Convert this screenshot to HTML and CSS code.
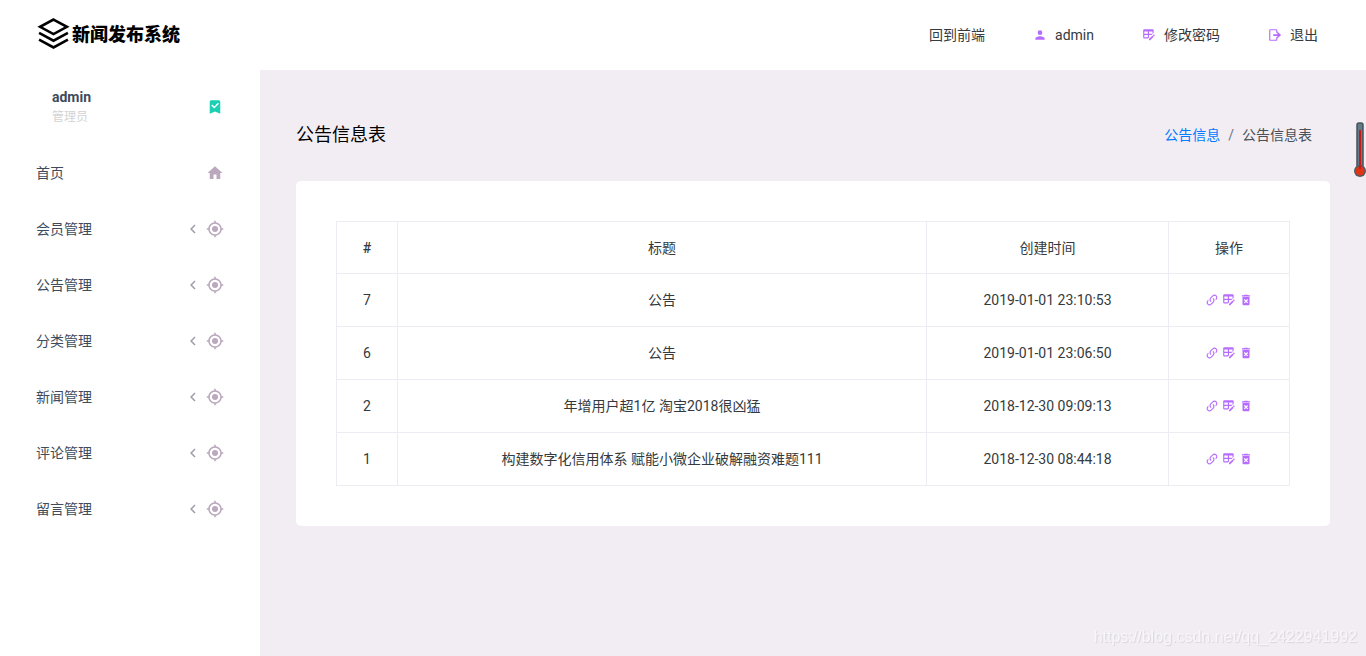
FILE: index.html
```html
<!DOCTYPE html>
<html lang="zh-CN">
<head>
<meta charset="utf-8">
<title>新闻发布系统</title>
<link rel="stylesheet" href="styles.css">
</head>
<body>
<svg class="sprite" aria-hidden="true">
  <symbol id="account" viewBox="0 0 24 24"><path d="M12,4A4,4 0 0,1 16,8A4,4 0 0,1 12,12A4,4 0 0,1 8,8A4,4 0 0,1 12,4M12,14C16.42,14 20,15.79 20,18V20H4V18C4,15.79 7.58,14 12,14Z"/></symbol>
  <symbol id="table-edit" viewBox="0 0 24 24"><path d="M21.7,13.35L20.7,14.35L18.65,12.3L19.65,11.3C19.86,11.08 20.21,11.08 20.42,11.3L21.7,12.58C21.92,12.79 21.92,13.14 21.7,13.35M12,18.94L18.07,12.88L20.12,14.93L14.06,21H12V18.94M4,2H18A2,2 0 0,1 20,4V8.17L16.17,12H12V16.17L10.17,18H4A2,2 0 0,1 2,16V4A2,2 0 0,1 4,2M4,6V10H10V6H4M12,6V10H18V6H12M4,12V16H10V12H4Z"/></symbol>
  <symbol id="logout" viewBox="0 0 24 24"><path d="M4,2H14A2,2 0 0,1 16,4V8H14V4H4V20H14V16H16V20A2,2 0 0,1 14,22H4A2,2 0 0,1 2,20V4A2,2 0 0,1 4,2M9,10.500H16V6L22.500,12L16,18V13.500H9Z"/></symbol>
  <symbol id="bookmark" viewBox="0 0 24 24"><path d="M17,3A2,2 0 0,1 19,5V21L12,18L5,21V5C5,3.89 5.9,3 7,3H17M11,14L17.25,7.76L15.84,6.34L11,11.18L8.41,8.59L7,10L11,14Z"/></symbol>
  <symbol id="home" viewBox="0 0 24 24"><path d="M10,20V14H14V20H19V12H22L12,3L2,12H5V20H10Z"/></symbol>
  <symbol id="target" viewBox="0 0 24 24"><path d="M12,8A4,4 0 0,1 16,12A4,4 0 0,1 12,16A4,4 0 0,1 8,12A4,4 0 0,1 12,8M3.05,13H1V11H3.05C3.5,6.83 6.83,3.5 11,3.05V1H13V3.05C17.17,3.5 20.5,6.83 20.95,11H23V13H20.95C20.5,17.17 17.17,20.5 13,20.95V23H11V20.95C6.83,20.5 3.5,17.17 3.05,13M12,5A7,7 0 0,0 5,12A7,7 0 0,0 12,19A7,7 0 0,0 19,12A7,7 0 0,0 12,5Z"/></symbol>
  <symbol id="chevron" viewBox="0 0 24 24"><path d="M15.41,16.58L10.83,12L15.41,7.41L14,6L8,12L14,18L15.41,16.58Z"/></symbol>
  <symbol id="link" viewBox="0 0 24 24"><path d="M10.59,13.41C11,13.8 11,14.44 10.59,14.83C10.2,15.22 9.56,15.22 9.17,14.83C7.22,12.88 7.22,9.71 9.17,7.76L12.71,4.22C14.66,2.27 17.83,2.27 19.78,4.22C21.73,6.17 21.73,9.34 19.78,11.29L18.29,12.78C18.3,11.96 18.17,11.14 17.89,10.36L18.36,9.88C19.54,8.71 19.54,6.81 18.36,5.64C17.19,4.46 15.29,4.46 14.12,5.64L10.59,9.17C9.41,10.34 9.41,12.24 10.59,13.41M13.41,9.17C13.8,8.78 14.44,8.78 14.83,9.17C16.78,11.12 16.78,14.29 14.83,16.24L11.29,19.78C9.34,21.73 6.17,21.73 4.22,19.78C2.27,17.83 2.27,14.66 4.22,12.71L5.71,11.22C5.7,12.04 5.83,12.86 6.11,13.65L5.64,14.12C4.46,15.29 4.46,17.19 5.64,18.36C6.81,19.54 8.71,19.54 9.88,18.36L13.41,14.83C14.59,13.66 14.59,11.76 13.41,10.59C13,10.2 13,9.56 13.41,9.17Z"/></symbol>
  <symbol id="delete" viewBox="0 0 24 24"><path fill-rule="evenodd" d="M9.500,3H14.500L15.500,4H19V6H5V4H8.500ZM6,7H18V19A2,2 0 0,1 16,21H8A2,2 0 0,1 6,19ZM9.800,10.400L8.400,11.800L10.600,14L8.400,16.200L9.800,17.600L12,15.400L14.200,17.600L15.600,16.200L13.400,14L15.600,11.800L14.200,10.400L12,12.600Z"/></symbol>
</svg>

<header class="topbar">
  <a class="brand" href="#">
    <svg class="brand-mark" viewBox="0 0 32 32" aria-hidden="true"><path d="M16 2.500 29 9.500 16 16.500 3 9.500ZM2 15.500 16 23 30 15.500M2 22 16 29.500 30 22"/></svg>
    <span class="brand-name">新闻发布系统</span>
  </a>
  <nav class="topnav">
    <a href="#">回到前端</a>
    <a href="#"><svg class="icon"><use href="#account"/></svg>admin</a>
    <a href="#"><svg class="icon"><use href="#table-edit"/></svg>修改密码</a>
    <a href="#"><svg class="icon"><use href="#logout"/></svg>退出</a>
  </nav>
</header>

<div class="layout">
  <aside class="sidebar">
    <div class="profile">
      <div class="profile-text">
        <span class="profile-name">admin</span>
        <span class="profile-role">管理员</span>
      </div>
      <svg class="menu-icon badge"><use href="#bookmark"/></svg>
    </div>
    <nav class="menu">
      <a href="#"><span>首页</span><svg class="menu-icon"><use href="#home"/></svg></a>
      <a href="#"><span>会员管理</span><svg class="arrow"><use href="#chevron"/></svg><svg class="menu-icon"><use href="#target"/></svg></a>
      <a href="#"><span>公告管理</span><svg class="arrow"><use href="#chevron"/></svg><svg class="menu-icon"><use href="#target"/></svg></a>
      <a href="#"><span>分类管理</span><svg class="arrow"><use href="#chevron"/></svg><svg class="menu-icon"><use href="#target"/></svg></a>
      <a href="#"><span>新闻管理</span><svg class="arrow"><use href="#chevron"/></svg><svg class="menu-icon"><use href="#target"/></svg></a>
      <a href="#"><span>评论管理</span><svg class="arrow"><use href="#chevron"/></svg><svg class="menu-icon"><use href="#target"/></svg></a>
      <a href="#"><span>留言管理</span><svg class="arrow"><use href="#chevron"/></svg><svg class="menu-icon"><use href="#target"/></svg></a>
    </nav>
  </aside>

  <main class="content">
    <div class="page-head">
      <h1>公告信息表</h1>
      <nav class="crumbs"><a href="#">公告信息</a><span class="slash">/</span><span>公告信息表</span></nav>
    </div>
    <section class="card">
      <table>
        <colgroup><col class="col-id"><col><col class="col-time"><col class="col-action"></colgroup>
        <thead>
          <tr><th class="head-id">#</th><th>标题</th><th>创建时间</th><th>操作</th></tr>
        </thead>
        <tbody>
          <tr><td>7</td><td>公告</td><td>2019-01-01 23:10:53</td><td><div class="actions"><a href="#" aria-label="查看"><svg><use href="#link"/></svg></a><a href="#" aria-label="编辑"><svg><use href="#table-edit"/></svg></a><a href="#" aria-label="删除"><svg><use href="#delete"/></svg></a></div></td></tr>
          <tr><td>6</td><td>公告</td><td>2019-01-01 23:06:50</td><td><div class="actions"><a href="#" aria-label="查看"><svg><use href="#link"/></svg></a><a href="#" aria-label="编辑"><svg><use href="#table-edit"/></svg></a><a href="#" aria-label="删除"><svg><use href="#delete"/></svg></a></div></td></tr>
          <tr><td>2</td><td>年增用户超1亿 淘宝2018很凶猛</td><td>2018-12-30 09:09:13</td><td><div class="actions"><a href="#" aria-label="查看"><svg><use href="#link"/></svg></a><a href="#" aria-label="编辑"><svg><use href="#table-edit"/></svg></a><a href="#" aria-label="删除"><svg><use href="#delete"/></svg></a></div></td></tr>
          <tr><td>1</td><td>构建数字化信用体系 赋能小微企业破解融资难题111</td><td>2018-12-30 08:44:18</td><td><div class="actions"><a href="#" aria-label="查看"><svg><use href="#link"/></svg></a><a href="#" aria-label="编辑"><svg><use href="#table-edit"/></svg></a><a href="#" aria-label="删除"><svg><use href="#delete"/></svg></a></div></td></tr>
        </tbody>
      </table>
    </section>
  </main>
</div>

<svg class="thermometer" viewBox="0 0 14 58" aria-hidden="true">
  <rect x="4" y="2" width="6" height="48" rx="2" fill="#687987" stroke="#45535f" stroke-width="1.500"/>
  <circle cx="7" cy="50" r="6" fill="#4d5c68"/>
  <circle cx="7" cy="50" r="4.500" fill="#df3514"/>
  <rect x="6" y="9" width="2" height="39" fill="#c51b12"/>
</svg>
<div class="watermark">https://blog.csdn.net/qq_2422941992</div>
</body>
</html>
```

FILE: styles.css
```css
* {
  box-sizing: border-box;
}

body {
  margin: 0;
  min-height: 100vh;
  display: flex;
  flex-direction: column;
  background: #fff;
  color: #343a40;
  font: 14px/20px Roboto, "Noto Sans CJK SC", sans-serif;
}

a {
  color: inherit;
  text-decoration: none;
}

svg {
  display: block;
  fill: currentColor;
}

.sprite {
  position: absolute;
  width: 0;
  height: 0;
}

.topbar {
  display: flex;
  align-items: center;
  justify-content: space-between;
  height: 70px;
  padding: 0 48px 0 37px;
}

.brand {
  display: flex;
  align-items: center;
  gap: 2px;
  padding-bottom: 4px;
  color: #000;
}

.brand-mark {
  width: 33px;
  height: 33px;
  fill: none;
  stroke: currentColor;
  stroke-width: 2.5;
}

.brand-name {
  font: 900 18px/24px "Noto Sans CJK SC", sans-serif;
}

.topnav {
  display: flex;
  gap: 48px;
}

.topnav a {
  display: flex;
  align-items: center;
  gap: 8px;
}

.icon {
  width: 14px;
  height: 14px;
  color: #b66dff;
}

.layout {
  display: flex;
  flex: 1;
}

.sidebar {
  flex: 0 0 260px;
}

.profile {
  display: flex;
  align-items: center;
  justify-content: space-between;
  padding: 17px 36px 17px 52px;
}

.profile-text {
  display: grid;
}

.profile-name {
  font-weight: 700;
  color: #3e4b5b;
}

.profile-role {
  font-size: 12px;
  color: #d3d3d3;
}

.menu a {
  display: flex;
  align-items: center;
  padding: 19px 36px 17px;
  color: #3e4b5b;
}

.menu span {
  flex: 1;
}

.arrow {
  width: 18px;
  height: 18px;
  margin-right: 4px;
  color: #9c9fa6;
}

.menu-icon {
  width: 18px;
  height: 18px;
  color: #bba8bf;
}

.badge {
  color: #1bcfb4;
}

.content {
  flex: 1;
  min-width: 0;
  padding: 52px 36px;
  background: #f2edf3;
}

.page-head {
  display: flex;
  align-items: center;
  justify-content: space-between;
  padding-right: 18px;
  margin-bottom: 33px;
}

h1 {
  margin: 0;
  font-size: 18px;
  line-height: 26px;
  font-weight: 400;
  color: #000;
}

.crumbs {
  display: flex;
  gap: 8px;
  color: #495057;
}

.crumbs a {
  color: #007bff;
}

.slash {
  color: #6c757d;
}

.card {
  padding: 40px;
  border-radius: 5px;
  background: #fff;
}

table {
  width: 100%;
  table-layout: fixed;
  border-collapse: collapse;
  text-align: center;
}

.col-id {
  width: 61px;
}

.col-time {
  width: 242px;
}

.col-action {
  width: 121px;
}

th,
td {
  padding: 16px 15px;
  border: 1px solid #ebedf2;
}

th {
  padding-bottom: 15px;
  font-weight: 400;
}

.head-id {
  font-weight: 500;
}

.actions {
  display: flex;
  justify-content: center;
  gap: 3px;
  color: #b66dff;
}

.actions svg {
  width: 14px;
  height: 14px;
}

.thermometer {
  position: fixed;
  top: 121px;
  right: -1px;
  width: 14px;
  height: 58px;
}

.watermark {
  position: fixed;
  right: 9px;
  bottom: 8px;
  font: 16px/22px "Liberation Sans", Arial, sans-serif;
  color: #f8f6f9;
  text-shadow: 1px 1px 1px #d8d4da;
}
```
